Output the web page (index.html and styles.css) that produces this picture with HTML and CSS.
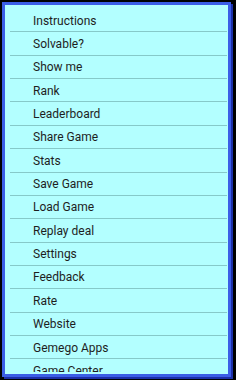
FILE: index.html
```html
<!DOCTYPE html>
<html>
<head>
<meta charset="utf-8">
<link rel="stylesheet" href="styles.css">
</head>
<body>
<div class="frame">
  <ul class="menu">
    <li>Instructions</li>
    <li>Solvable?</li>
    <li>Show me</li>
    <li>Rank</li>
    <li>Leaderboard</li>
    <li>Share Game</li>
    <li>Stats</li>
    <li>Save Game</li>
    <li>Load Game</li>
    <li>Replay deal</li>
    <li>Settings</li>
    <li>Feedback</li>
    <li>Rate</li>
    <li>Website</li>
    <li>Gemego Apps</li>
    <li>Game Center</li>
  </ul>
</div>
</body>
</html>
```
FILE: styles.css
```css
html, body {
  margin: 0;
  padding: 0;
  background: #000;
  width: 236px;
  height: 380px;
  overflow: hidden;
}
.frame {
  box-sizing: border-box;
  margin: 2px 0 0 2px;
  width: 229px;
  height: 375px;
  border: 3px solid #3b5ee6;
  box-shadow: 2px 2px 0 #1c2fa8;
  background: #b3ffff;
  overflow: hidden;
}
.menu {
  box-sizing: border-box;
  list-style: none;
  margin: 0;
  padding: 4px 0 0 5px;
  height: 367px;
  overflow: hidden;
}
.menu li {
  box-sizing: border-box;
  height: 23.36px;
  width: 217px;
  line-height: 22.36px;
  padding-top: 0.5px;
  border-bottom: 1px solid #86c9c9;
  padding-left: 23px;
  font-family: Roboto, "Liberation Sans", sans-serif;
  font-size: 12px;
  color: #1e1e1e;
  white-space: nowrap;
}
```
